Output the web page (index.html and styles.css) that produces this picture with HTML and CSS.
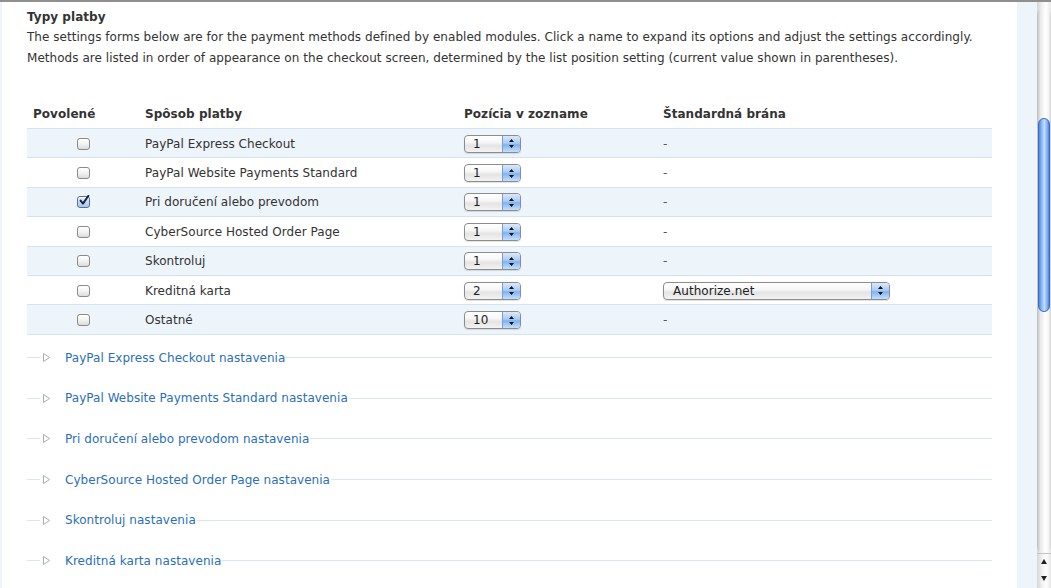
FILE: index.html
```html
<!DOCTYPE html>
<html lang="sk">
<head>
<meta charset="utf-8">
<title>Typy platby</title>
<link rel="stylesheet" href="styles.css">
</head>
<body>
<div class="frame">
  <div class="strip-left"></div>
  <main class="content">
    <h3 class="title">Typy platby</h3>
    <p class="desc">The settings forms below are for the payment methods defined by enabled modules. Click a name to expand its options and adjust the settings accordingly.<br>Methods are listed in order of appearance on the checkout screen, determined by the list position setting (current value shown in parentheses).</p>

    <table class="methods">
      <thead>
        <tr>
          <th class="col-en">Povolené</th>
          <th class="col-name">Spôsob platby</th>
          <th class="col-pos">Pozícia v zozname</th>
          <th class="col-gw">Štandardná brána</th>
        </tr>
      </thead>
      <tbody>
        <tr class="odd">
          <td class="cell-cb"><span class="cb"></span></td>
          <td>PayPal Express Checkout</td>
          <td><span class="sel sel-s"><span class="sel-v">1</span><span class="sel-st"><svg width="7" height="11" viewBox="0 0 7 11"><path d="M3.5 1 L6 4 L1 4 Z M1 7 L6 7 L3.5 10 Z" fill="#111"/></svg></span></span></td>
          <td class="dash">-</td>
        </tr>
        <tr>
          <td class="cell-cb"><span class="cb"></span></td>
          <td>PayPal Website Payments Standard</td>
          <td><span class="sel sel-s"><span class="sel-v">1</span><span class="sel-st"><svg width="7" height="11" viewBox="0 0 7 11"><path d="M3.5 1 L6 4 L1 4 Z M1 7 L6 7 L3.5 10 Z" fill="#111"/></svg></span></span></td>
          <td class="dash">-</td>
        </tr>
        <tr class="odd">
          <td class="cell-cb"><span class="cb cb-on"><svg width="12" height="12" viewBox="0 0 12 12"><path d="M2.6 5.6 L5 8.6 L10.4 0.8" fill="none" stroke="#14213d" stroke-width="1.9" stroke-linecap="round" stroke-linejoin="round"/></svg></span></td>
          <td>Pri doručení alebo prevodom</td>
          <td><span class="sel sel-s"><span class="sel-v">1</span><span class="sel-st"><svg width="7" height="11" viewBox="0 0 7 11"><path d="M3.5 1 L6 4 L1 4 Z M1 7 L6 7 L3.5 10 Z" fill="#111"/></svg></span></span></td>
          <td class="dash">-</td>
        </tr>
        <tr>
          <td class="cell-cb"><span class="cb"></span></td>
          <td>CyberSource Hosted Order Page</td>
          <td><span class="sel sel-s"><span class="sel-v">1</span><span class="sel-st"><svg width="7" height="11" viewBox="0 0 7 11"><path d="M3.5 1 L6 4 L1 4 Z M1 7 L6 7 L3.5 10 Z" fill="#111"/></svg></span></span></td>
          <td class="dash">-</td>
        </tr>
        <tr class="odd">
          <td class="cell-cb"><span class="cb"></span></td>
          <td>Skontroluj</td>
          <td><span class="sel sel-s"><span class="sel-v">1</span><span class="sel-st"><svg width="7" height="11" viewBox="0 0 7 11"><path d="M3.5 1 L6 4 L1 4 Z M1 7 L6 7 L3.5 10 Z" fill="#111"/></svg></span></span></td>
          <td class="dash">-</td>
        </tr>
        <tr>
          <td class="cell-cb"><span class="cb"></span></td>
          <td>Kreditná karta</td>
          <td><span class="sel sel-s"><span class="sel-v">2</span><span class="sel-st"><svg width="7" height="11" viewBox="0 0 7 11"><path d="M3.5 1 L6 4 L1 4 Z M1 7 L6 7 L3.5 10 Z" fill="#111"/></svg></span></span></td>
          <td><span class="sel sel-l"><span class="sel-v">Authorize.net</span><span class="sel-st"><svg width="7" height="11" viewBox="0 0 7 11"><path d="M3.5 1 L6 4 L1 4 Z M1 7 L6 7 L3.5 10 Z" fill="#111"/></svg></span></span></td>
        </tr>
        <tr class="odd">
          <td class="cell-cb"><span class="cb"></span></td>
          <td>Ostatné</td>
          <td><span class="sel sel-s"><span class="sel-v">10</span><span class="sel-st"><svg width="7" height="11" viewBox="0 0 7 11"><path d="M3.5 1 L6 4 L1 4 Z M1 7 L6 7 L3.5 10 Z" fill="#111"/></svg></span></span></td>
          <td class="dash">-</td>
        </tr>
      </tbody>
    </table>

    <div class="sections">
      <div class="section"><span class="rule-l"></span><svg class="tri" width="7" height="9" viewBox="0 0 7 9"><path d="M0.5 0.5 L6.5 4.5 L0.5 8.5 Z" fill="#fff" stroke="#adadad"/></svg><a class="sec-link" href="#">PayPal Express Checkout nastavenia</a><span class="rule"></span></div>
      <div class="section"><span class="rule-l"></span><svg class="tri" width="7" height="9" viewBox="0 0 7 9"><path d="M0.5 0.5 L6.5 4.5 L0.5 8.5 Z" fill="#fff" stroke="#adadad"/></svg><a class="sec-link" href="#">PayPal Website Payments Standard nastavenia</a><span class="rule"></span></div>
      <div class="section"><span class="rule-l"></span><svg class="tri" width="7" height="9" viewBox="0 0 7 9"><path d="M0.5 0.5 L6.5 4.5 L0.5 8.5 Z" fill="#fff" stroke="#adadad"/></svg><a class="sec-link" href="#">Pri doručení alebo prevodom nastavenia</a><span class="rule"></span></div>
      <div class="section"><span class="rule-l"></span><svg class="tri" width="7" height="9" viewBox="0 0 7 9"><path d="M0.5 0.5 L6.5 4.5 L0.5 8.5 Z" fill="#fff" stroke="#adadad"/></svg><a class="sec-link" href="#">CyberSource Hosted Order Page nastavenia</a><span class="rule"></span></div>
      <div class="section"><span class="rule-l"></span><svg class="tri" width="7" height="9" viewBox="0 0 7 9"><path d="M0.5 0.5 L6.5 4.5 L0.5 8.5 Z" fill="#fff" stroke="#adadad"/></svg><a class="sec-link" href="#">Skontroluj nastavenia</a><span class="rule"></span></div>
      <div class="section"><span class="rule-l"></span><svg class="tri" width="7" height="9" viewBox="0 0 7 9"><path d="M0.5 0.5 L6.5 4.5 L0.5 8.5 Z" fill="#fff" stroke="#adadad"/></svg><a class="sec-link" href="#">Kreditná karta nastavenia</a><span class="rule"></span></div>
    </div>
  </main>
  <div class="strip-right"></div>
  <div class="scrollbar">
    <div class="track">
      <div class="thumb"></div>
    </div>
    <div class="arrows">
      <svg width="14" height="16" viewBox="0 0 14 16"><path d="M7 5 L10 10 L4 10 Z" fill="#222"/></svg>
      <svg width="14" height="16" viewBox="0 0 14 16"><path d="M4 6 L10 6 L7 11 Z" fill="#222"/></svg>
    </div>
  </div>
</div>
</body>
</html>
```

FILE: styles.css
```css
html, body {
  margin: 0;
  padding: 0;
  background: #ffffff;
}

body {
  font-family: "DejaVu Sans", Verdana, sans-serif;
  font-size: 12px;
  line-height: 20px;
  letter-spacing: 0.04px;
  color: #333333;
  overflow: hidden;
}

.frame {
  display: flex;
  height: 588px;
  box-sizing: border-box;
  border-top: 2px solid #8f8f8f;
  overflow: hidden;
}

.strip-left {
  width: 2px;
  flex: none;
  background: #edf4fa;
}

.content {
  width: 1015px;
  flex: none;
  box-sizing: border-box;
  padding: 5px 25px 0 25px;
  background: #ffffff;
}

.title {
  margin: 0;
  font-size: 12px;
  line-height: 20px;
  font-weight: bold;
  color: #333333;
}

.desc {
  margin: 0;
  line-height: 20.5px;
}

.methods {
  width: 965px;
  margin-top: 32px;
  border-collapse: collapse;
  table-layout: fixed;
}

.methods th {
  text-align: left;
  font-weight: bold;
  padding: 4px 6px 4px 6px;
  line-height: 20px;
  color: #333333;
}

.col-en { width: 100px; }
.col-name { width: 307px; }
.col-pos { width: 187px; }
.col-gw { width: auto; }

.methods td {
  height: 27.4px;
  padding: 1px 6px 0 6px;
  border-top: 1px solid #d3e4f1;
  border-bottom: 1px solid #d3e4f1;
  vertical-align: middle;
  line-height: 16px;
}

.methods tr.odd td {
  background: #edf4fa;
}

.cell-cb {
  text-align: center;
  font-size: 0;
  line-height: 0;
}

.cb {
  display: inline-block;
  position: relative;
  width: 11px;
  height: 10px;
  border: 1px solid #8a8a8a;
  border-radius: 3px;
  background: linear-gradient(#ffffff, #f2f2f2 50%, #dcdcdc);
  box-shadow: inset 0 1px 0 #ffffff;
  vertical-align: middle;
}

.cb-on {
  border-color: #5a6f96;
  background: linear-gradient(#e9f1fc, #c5d9f3 50%, #a9c6ee);
}

.cb-on svg {
  position: absolute;
  left: 0;
  top: -2px;
}

.dash {
  color: #555555;
}

.sel {
  display: inline-flex;
  box-sizing: border-box;
  height: 18px;
  border: 1px solid #8c8c8c;
  border-radius: 4px;
  overflow: hidden;
  background: linear-gradient(#ffffff, #f7f7f7 40%, #e4e4e4 60%, #f3f3f3);
  vertical-align: middle;
  box-shadow: 0 1px 1px rgba(0, 0, 0, 0.12);
}

.sel-s { width: 57px; }
.sel-l { width: 227px; }

.sel-v {
  flex: 1;
  padding-left: 8px;
  font-size: 12px;
  line-height: 16px;
  color: #1e1e1e;
  white-space: nowrap;
}

.sel-l .sel-v {
  padding-left: 9px;
}

.sel-st {
  width: 17px;
  flex: none;
  display: flex;
  align-items: center;
  justify-content: center;
  border-left: 1px solid #7e9dd0;
  background: linear-gradient(#dbe9fb, #a9cbf4 45%, #80b3f0 55%, #c4e0fd);
}

.sections {
  padding-top: 15px;
}

.section {
  display: flex;
  align-items: center;
  height: 16px;
  margin-bottom: 24.6px;
}

.rule-l {
  width: 13px;
  height: 1px;
  background: #dae5ec;
  flex: none;
}

.tri {
  flex: none;
  margin-left: 3px;
  margin-right: 15px;
}

.sec-link {
  color: #2b6fba;
  text-decoration: none;
  white-space: nowrap;
  line-height: 16px;
}

.rule {
  flex: 1;
  height: 1px;
  margin-left: 1px;
  background: #dae5ec;
}

.strip-right {
  width: 20px;
  flex: none;
  background: #edf4fa;
}

.scrollbar {
  width: 14px;
  flex: none;
  display: flex;
  flex-direction: column;
  background: linear-gradient(to right, #d6d6d6, #f0f0f0 35%, #ffffff 65%, #e6e6e6);
}

.track {
  flex: 1;
  margin-top: 6px;
  border-radius: 7px;
  padding-top: 110px;
  background: linear-gradient(to right, #bdbdbd, #e9e9e9 25%, #ffffff 60%, #f2f2f2 85%, #cfcfcf);
}

.thumb {
  height: 194px;
  margin: 0 1px;
  border-radius: 6px;
  border: 1px solid #3a6bc4;
  box-sizing: border-box;
  background: linear-gradient(to right, #4f86de, #9fc6f6 35%, #c2dcfb 55%, #77aaf0 85%, #4c80d8);
}

.arrows {
  height: 34px;
  display: flex;
  flex-direction: column;
  border-top: 1px solid #c4c4c4;
}

.arrows svg {
  display: block;
}
```
